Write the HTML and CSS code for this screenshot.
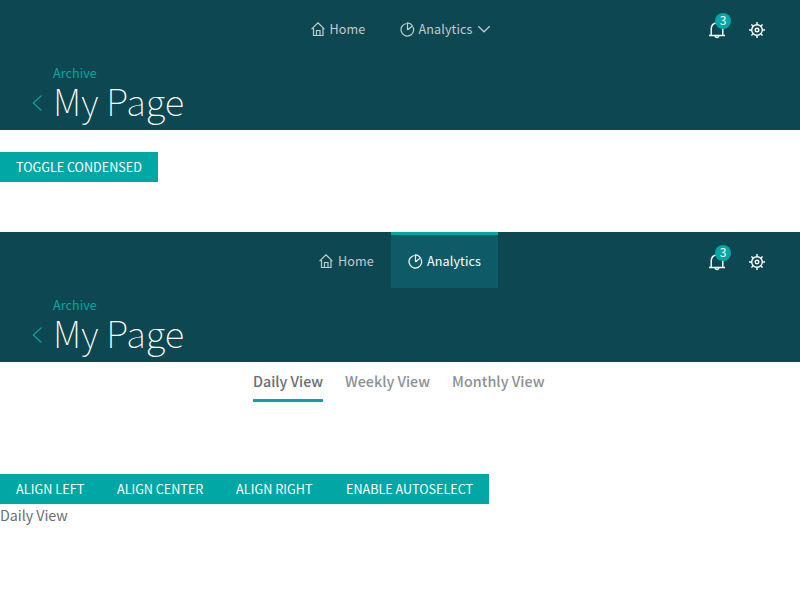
FILE: index.html
```
<!DOCTYPE html>
<html lang="en">
<head>
<meta charset="utf-8">
<title>My Page</title>
<link rel="stylesheet" href="styles.css">
</head>
<body>
<svg class="defs" aria-hidden="true">
  <symbol id="home" viewBox="0 0 15 15"><path d="M.6 7.200 7 .8l6.400 6.400M2.500 6v7.500h9.500V6M5.500 13.500V8.500h3.500v5"/></symbol>
  <symbol id="pie" viewBox="0 0 15 15"><path d="M6.500 1.500a6.300 6.300 0 1 0 6.500 3.500M7.500 8V.9a6.300 6.300 0 0 1 5 2.900L7.500 8"/></symbol>
  <symbol id="down" viewBox="0 0 14 14"><path d="m1.300 4.200 5.700 5.600 5.700-5.600"/></symbol>
  <symbol id="back" viewBox="0 0 12 18"><path d="M10.500 1.500 2.300 9l8.200 7.500"/></symbol>
  <symbol id="bell" viewBox="0 0 18 18"><path d="M1 14.500h16M3.200 14.500V8c0-3.500 2.200-6 5.800-6s5.800 2.500 5.800 6v6.500M7.200 14.500c0 2.600 3.600 2.600 3.600 0"/></symbol>
  <symbol id="gear" viewBox="0 0 18 18"><circle cx="9" cy="9" r="5.300"/><circle cx="9" cy="9" r="1.800"/><path d="M9 1v2.700M9 14.300V17M1 9h2.700M14.300 9H17M3.400 3.400l1.900 1.900M12.700 12.700l1.900 1.900M14.600 3.400l-1.900 1.900M5.300 12.700l-1.900 1.900"/></symbol>
</svg>

<header class="header">
  <div class="bar">
    <nav class="nav">
      <a class="nav-item"><svg class="icon"><use href="#home"/></svg><span>Home</span></a>
      <a class="nav-item"><svg class="icon"><use href="#pie"/></svg><span class="analytics">Analytics</span><svg class="chevron"><use href="#down"/></svg></a>
    </nav>
    <div class="actions">
      <span class="action"><svg><use href="#bell"/></svg><b class="badge">3</b></span>
      <span class="action"><svg><use href="#gear"/></svg></span>
    </div>
  </div>
  <div class="title-row">
    <svg class="back"><use href="#back"/></svg>
    <div><div class="crumb">Archive</div><h1>My Page</h1></div>
  </div>
</header>
<div class="toolbar first"><button class="button toggle"><span>TOGGLE CONDENSED</span></button></div>

<header class="header">
  <div class="bar">
    <nav class="nav">
      <a class="nav-item"><svg class="icon"><use href="#home"/></svg><span>Home</span></a>
      <a class="nav-item active"><svg class="icon"><use href="#pie"/></svg><span class="analytics">Analytics</span></a>
    </nav>
    <div class="actions">
      <span class="action"><svg><use href="#bell"/></svg><b class="badge">3</b></span>
      <span class="action"><svg><use href="#gear"/></svg></span>
    </div>
  </div>
  <div class="title-row">
    <svg class="back"><use href="#back"/></svg>
    <div><div class="crumb">Archive</div><h1>My Page</h1></div>
  </div>
</header>
<div class="tabs">
  <a class="tab selected">Daily View</a>
  <a class="tab weekly">Weekly View</a>
  <a class="tab monthly">Monthly View</a>
</div>
<div class="toolbar">
  <button class="button left"><span>ALIGN LEFT</span></button>
  <button class="button center"><span>ALIGN CENTER</span></button>
  <button class="button right"><span>ALIGN RIGHT</span></button>
  <button class="button auto"><span>ENABLE AUTOSELECT</span></button>
</div>
<p class="content">Daily View</p>
</body>
</html>
```
FILE: styles.css
```
* { box-sizing: border-box; }
body { margin: 0; background: #fff; color: #6a6e70; font: 14.3px/20px "Noto Sans CJK SC", sans-serif; }
svg { fill: none; stroke: currentColor; stroke-width: 1.2; flex: none; }
.defs { display: none; }
.header { height: 130px; background: #0d4751; color: #fff; }
.bar { height: 56px; display: grid; grid-template-columns: 1fr auto 1fr; }
.nav { grid-column: 2; display: flex; }
.nav-item { display: flex; align-items: center; padding: 2px 16px 0 17px; font-size: 12.6px; color: #c3cccf; }
.nav-item span { width: 37px; white-space: nowrap; letter-spacing: .1px; }
.nav-item .analytics { width: 55px; }
.nav-item.active { background: #0f5a67; color: #fff; box-shadow: inset 0 3px #00a7a4; }
.icon { width: 15px; height: 15px; margin-right: 4px; }
.chevron { width: 14px; height: 14px; margin-left: 3px; }
.actions { display: flex; justify-content: flex-end; align-items: center; gap: 22px; padding: 4px 34px 0 0; }
.action { position: relative; width: 18px; height: 18px; }
.action svg { width: 18px; height: 18px; display: block; stroke-width: 1.4; }
.badge { position: absolute; left: 7px; top: -8px; width: 16px; height: 16px; border-radius: 50%; background: #00a7a4; font-size: 12px; font-weight: 400; line-height: 14px; text-align: center; }
.title-row { display: flex; padding: 7px 0 0 31px; }
.back { width: 12px; height: 18px; margin: 31px 10px 0 0; color: #00a7a4; }
.crumb { font-size: 12.6px; letter-spacing: .05px; color: #00a7a4; }
h1 { margin: 0; font-size: 36.6px; font-weight: 100; line-height: 36px; }
.toolbar { display: flex; height: 30px; }
.first { margin: 22px 0 50px; }
.button { border: 0; margin: 0; padding: 0 15px 0 16px; background: #00a7a4; color: #fff; font: 12.6px/30px "Noto Sans CJK SC", sans-serif; text-align: left; white-space: nowrap; }
.toggle { width: 158px; }
.left { width: 101px; letter-spacing: .08px; }
.center { width: 119px; }
.right { width: 110px; letter-spacing: .08px; }
.auto { width: 159px; }
.tabs { display: flex; justify-content: center; gap: 22px; height: 40px; margin-bottom: 72px; padding-right: 2px; font-weight: 500; color: #8d9193; }
.tab { width: 70px; padding-top: 9px; white-space: nowrap; }
.weekly { width: 85px; }
.monthly { width: 93px; letter-spacing: .05px; }
.selected { color: #6a6e70; border-bottom: 3px solid #00a7a4; }
.content { margin: 1px 0 0; letter-spacing: -.05px; }
```
